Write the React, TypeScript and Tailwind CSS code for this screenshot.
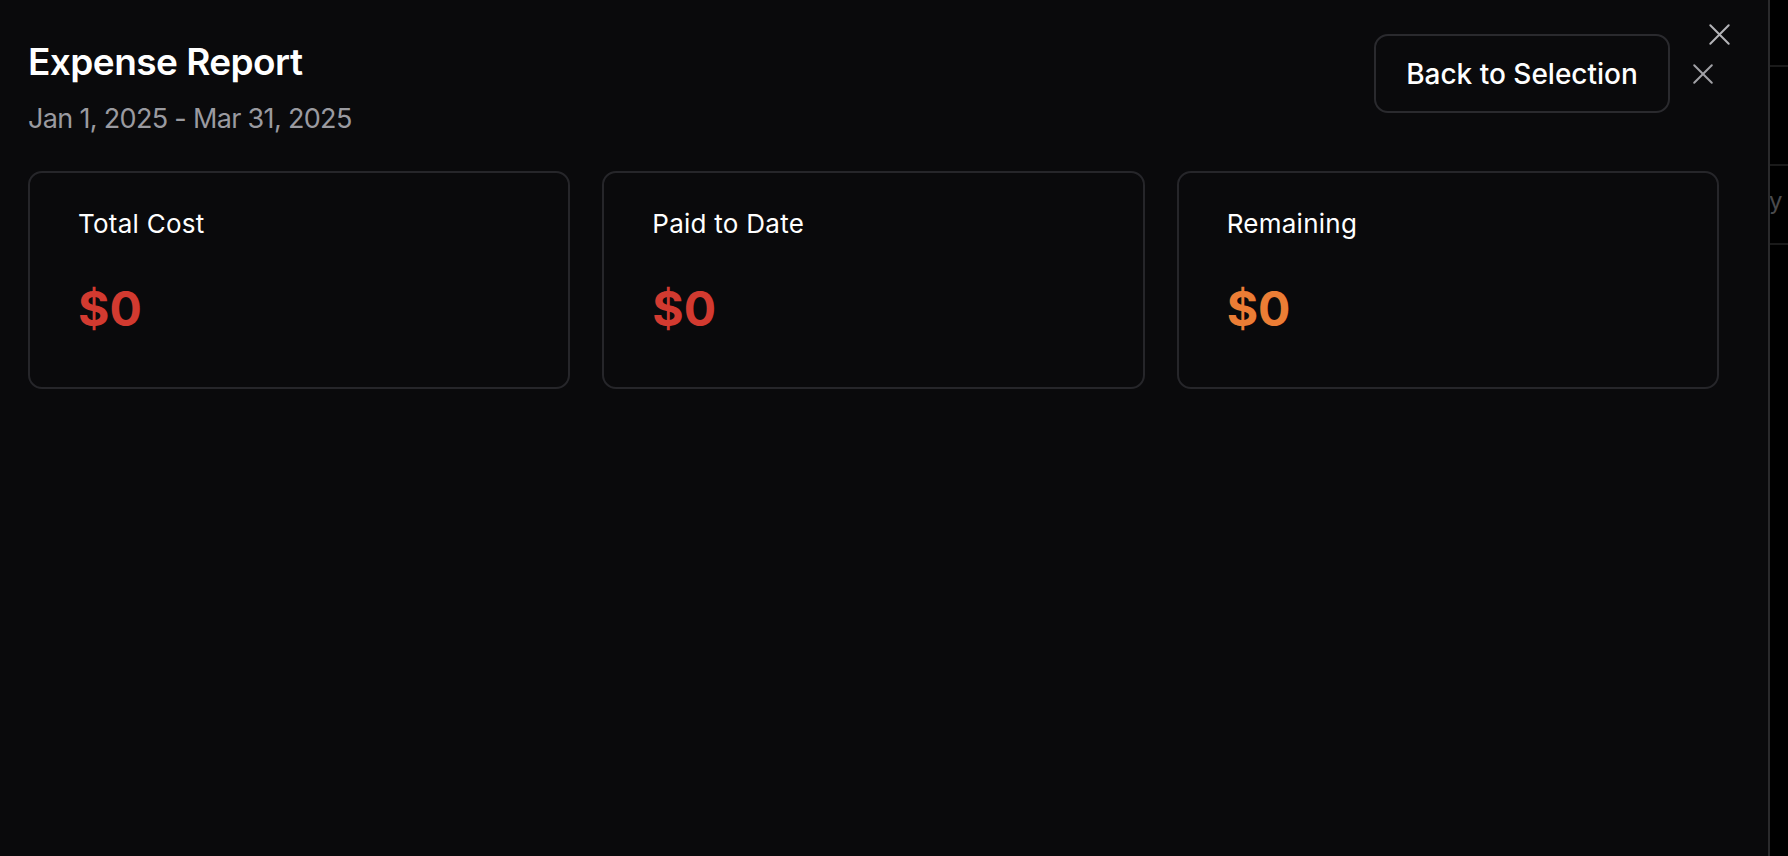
import React from "react";

function XIcon({ size, className }: { size: number; className?: string }) {
  return (
    <svg width={size} height={size} viewBox="0 0 20 20" className={className} fill="none">
      <path d="M2 2 L18 18 M18 2 L2 18" stroke="currentColor" strokeWidth={2 * (20 / size)} strokeLinecap="round" />
    </svg>
  );
}

function StatCard({ label, value, color }: { label: string; value: string; color: string }) {
  return (
    <div className="rounded-[14px] border-2 border-[#26262a] bg-[#0a0a0c] pl-[48px] pr-[48px] pt-[34px] pb-[54px]">
      <div className="text-[26px] leading-[33px] font-normal tracking-[0.01em] text-white">{label}</div>
      <div className={`mt-[45px] text-[48px] leading-[48px] font-bold ${color}`}>{value}</div>
    </div>
  );
}

export default function App() {
  return (
    <div
      className="flex h-[856px] w-full overflow-hidden bg-black"
      style={{ fontFamily: "Inter, 'Noto Sans', sans-serif" }}
    >
      <div className="relative flex-1 h-full bg-[#0a0a0c] border-r-2 border-[#2a2a2c] pl-[28px] pr-[49px] pt-[34px]">
        <button className="absolute right-[37px] top-[23px] text-[#b4b4b8]">
          <XIcon size={23} />
        </button>
        <div className="flex items-start justify-between">
          <div className="pt-[5px]">
            <h1 className="text-[37px] leading-[46px] font-semibold text-white tracking-[-0.015em]">Expense Report</h1>
            <p className="mt-[16px] text-[27px] leading-[36px] tracking-[-0.025em] text-[#9a9aa0]">Jan 1, 2025 - Mar 31, 2025</p>
          </div>
          <div className="flex items-center gap-[17px]">
            <button className="h-[79px] w-[296px] rounded-[14px] border-2 border-[#2a2a2e] bg-[#0a0a0c] text-[28px] font-medium text-white">
              Back to Selection
            </button>
            <button className="flex h-[32px] w-[32px] items-center justify-center text-[#a1a1a6]">
              <XIcon size={22} />
            </button>
          </div>
        </div>
        <div className="mt-[34px] grid grid-cols-3 gap-[32px]">
          <StatCard label="Total Cost" value="$0" color="text-[#d23a30]" />
          <StatCard label="Paid to Date" value="$0" color="text-[#d23a30]" />
          <StatCard label="Remaining" value="$0" color="text-[#ec7d35]" />
        </div>
      </div>
      <div className="w-[18px] h-full bg-black overflow-hidden flex flex-col">
        <div className="h-[67px] border-b-2 border-[#1a1a1a]" />
        <div className="h-[99px] border-b-2 border-[#1a1a1a]" />
        <div className="h-[79px] border-b-2 border-[#1a1a1a] relative overflow-hidden">
          <span className="absolute left-[-1px] top-[19px] text-[24px] leading-[32px] text-[#4a4a4c]">y</span>
        </div>
        <div className="flex-1" />
      </div>
    </div>
  );
}
